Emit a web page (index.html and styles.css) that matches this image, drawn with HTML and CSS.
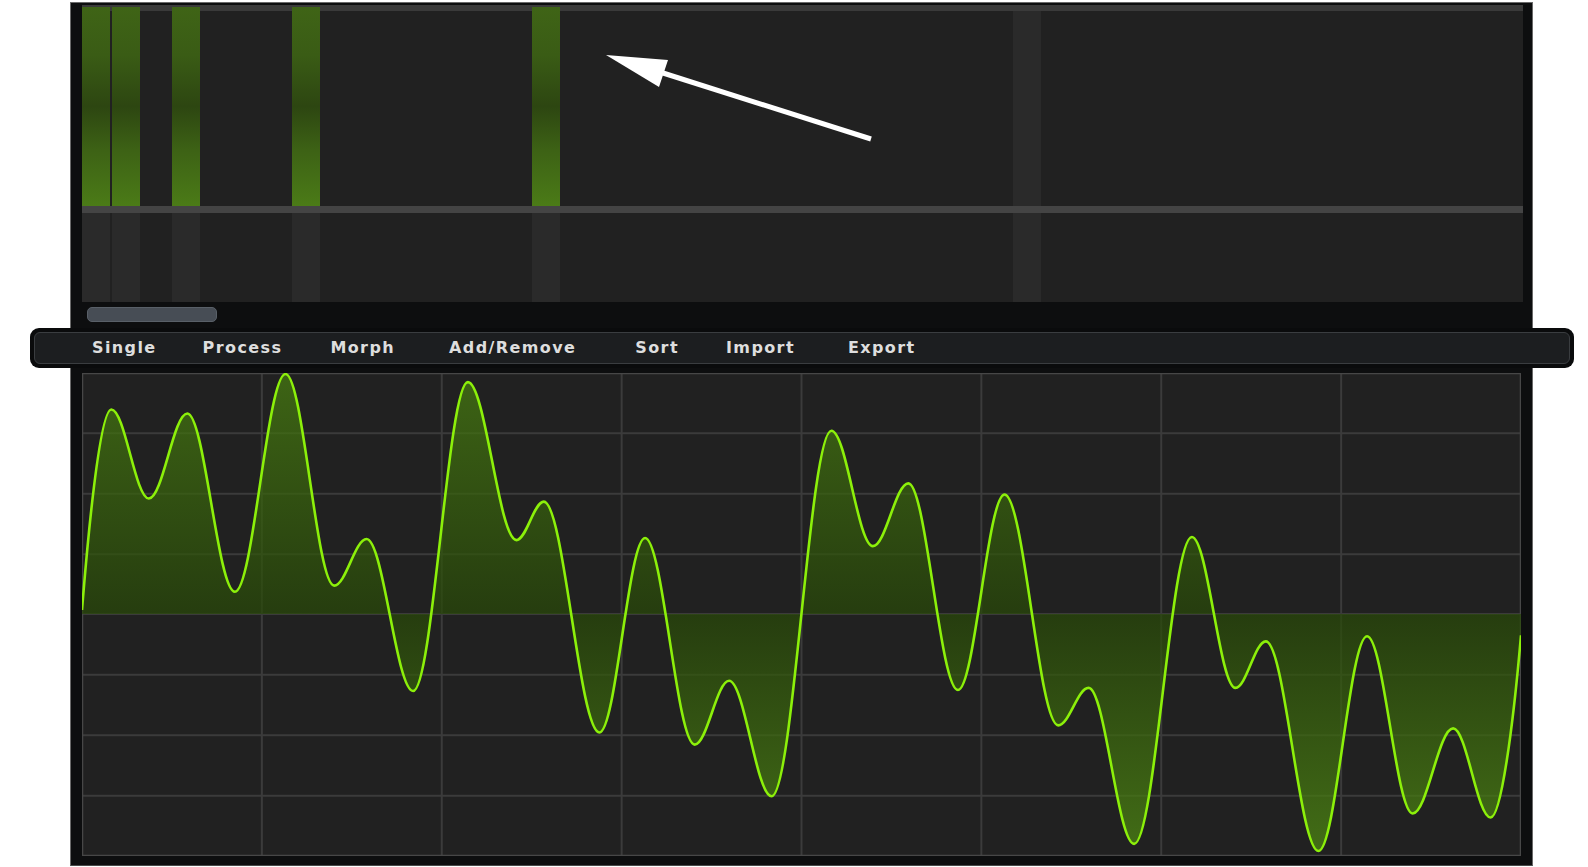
FILE: index.html
```html
<!DOCTYPE html>
<html>
<head>
<meta charset="utf-8">
<title>Wavetable</title>
<link rel="stylesheet" href="styles.css">
</head>
<body>
<div class="panel">
  <div class="harmonics">
    <div class="hx-top">
      <span class="b"></span><span class="b"></span><span></span><span class="b"></span>
      <span></span><span></span><span></span><span class="b"></span>
      <span></span><span></span><span></span><span></span><span></span><span></span><span></span><span class="b"></span>
      <span></span><span></span><span></span><span></span><span></span><span></span><span></span><span></span>
      <span></span><span></span><span></span><span></span><span></span><span></span><span></span><span class="d"></span>
      <span></span><span></span><span></span><span></span><span></span><span></span><span></span><span></span>
      <span></span><span></span><span></span><span></span><span></span><span></span><span></span><span></span>
    </div>
    <div class="hx-sep"></div>
    <div class="hx-bottom">
      <span class="l"></span><span class="l"></span><span></span><span class="l"></span>
      <span></span><span></span><span></span><span class="l"></span>
      <span></span><span></span><span></span><span></span><span></span><span></span><span></span><span class="l"></span>
      <span></span><span></span><span></span><span></span><span></span><span></span><span></span><span></span>
      <span></span><span></span><span></span><span></span><span></span><span></span><span></span><span class="l"></span>
      <span></span><span></span><span></span><span></span><span></span><span></span><span></span><span></span>
      <span></span><span></span><span></span><span></span><span></span><span></span><span></span><span></span>
    </div>
    <svg class="arrow" width="1441" height="297" viewBox="0 0 1441 297">
      <line x1="581" y1="68" x2="789" y2="134" stroke="#ffffff" stroke-width="5"/>
      <polygon points="524,50 586,55 577,82" fill="#ffffff"/>
    </svg>
  </div>
  <div class="scroll"><div class="thumb"></div></div>
  <div class="menu">
    <div class="menu-inner">
      <span class="item">Single</span>
      <span class="item">Process</span>
      <span class="item item-morph">Morph</span>
      <span class="item item-add">Add/Remove</span>
      <span class="item item-sort">Sort</span>
      <span class="item item-import">Import</span>
      <span class="item item-export">Export</span>
    </div>
  </div>
  <div class="wave">
    <svg width="1439" height="483" viewBox="81 368 1421 477" preserveAspectRatio="none">
      <defs>
        <linearGradient id="fillg" gradientUnits="userSpaceOnUse" x1="0" y1="368" x2="0" y2="845">
          <stop offset="0" stop-color="rgb(72,126,16)" stop-opacity="0.72"/>
          <stop offset="0.5" stop-color="rgb(40,72,8)" stop-opacity="0.72"/>
          <stop offset="1" stop-color="rgb(80,140,18)" stop-opacity="0.72"/>
        </linearGradient>
      </defs>
      <path class="grid" d="M258.6,368V845M436.25,368V845M613.9,368V845M791.5,368V845M969.1,368V845M1146.75,368V845M1324.4,368V845M81,427.6H1502M81,487.2H1502M81,546.9H1502M81,606H1502M81,666.1H1502M81,725.7H1502M81,785.4H1502"/>
      <rect class="frame" x="81.5" y="368.5" width="1420" height="476"/>
      <path class="area" d="M81,602 C86,540 98,404 110,404 C123.3,404 133.7,492 147,492 C160.7,492 171.3,408 185,408 C201.9,408 215.1,584 232,584 C250,584 264,369 282,369 C299.3,369 312.7,578 330,578 C341.5,578 350.5,532 362,532 C378.6,532 391.4,682 408,682 C427.4,682 442.6,377 462,377 C479.3,377 492.7,533 510,533 C519.7,533 527.3,495 537,495 C556.8,495 572.2,723 592,723 C608.2,723 620.8,531 637,531 C654.6,531 668.4,735 686,735 C698.2,735 707.8,672 720,672 C735.1,672 746.9,786 762,786 C783.2,786 799.8,425 821,425 C835.8,425 847.2,539 862,539 C874.6,539 884.4,477 897,477 C914.6,477 928.4,681 946,681 C962.6,681 975.4,488 992,488 C1011.1,488 1025.9,716 1045,716 C1055.8,716 1064.2,679 1075,679 C1091.2,679 1103.8,833 1120,833 C1140.5,833 1156.5,530 1177,530 C1192.5,530 1204.5,679 1220,679 C1230.8,679 1239.2,633 1250,633 C1268.7,633 1283.3,840 1302,840 C1319.3,840 1332.7,628 1350,628 C1366.2,628 1378.8,803 1395,803 C1409.4,803 1420.6,719 1435,719 C1448.3,719 1458.7,807 1472,807 C1482,807 1494,720 1502,627 L1502,606 L81,606 Z"/>
      <path class="line" d="M81,602 C86,540 98,404 110,404 C123.3,404 133.7,492 147,492 C160.7,492 171.3,408 185,408 C201.9,408 215.1,584 232,584 C250,584 264,369 282,369 C299.3,369 312.7,578 330,578 C341.5,578 350.5,532 362,532 C378.6,532 391.4,682 408,682 C427.4,682 442.6,377 462,377 C479.3,377 492.7,533 510,533 C519.7,533 527.3,495 537,495 C556.8,495 572.2,723 592,723 C608.2,723 620.8,531 637,531 C654.6,531 668.4,735 686,735 C698.2,735 707.8,672 720,672 C735.1,672 746.9,786 762,786 C783.2,786 799.8,425 821,425 C835.8,425 847.2,539 862,539 C874.6,539 884.4,477 897,477 C914.6,477 928.4,681 946,681 C962.6,681 975.4,488 992,488 C1011.1,488 1025.9,716 1045,716 C1055.8,716 1064.2,679 1075,679 C1091.2,679 1103.8,833 1120,833 C1140.5,833 1156.5,530 1177,530 C1192.5,530 1204.5,679 1220,679 C1230.8,679 1239.2,633 1250,633 C1268.7,633 1283.3,840 1302,840 C1319.3,840 1332.7,628 1350,628 C1366.2,628 1378.8,803 1395,803 C1409.4,803 1420.6,719 1435,719 C1448.3,719 1458.7,807 1472,807 C1482,807 1494,720 1502,627"/>
    </svg>
  </div>
</div>
</body>
</html>
```

FILE: styles.css
```css
html, body {
  margin: 0;
  padding: 0;
  background: #ffffff;
}

body {
  font-family: "DejaVu Sans", "Liberation Sans", sans-serif;
  overflow: hidden;
}

.panel {
  box-sizing: border-box;
  margin: 2px 0 0 70px;
  width: 1463px;
  height: 864px;
  border: 1px solid #6a6a6a;
  border-bottom-color: #4a4a4a;
  background: #0d0e0f;
  display: flex;
  flex-direction: column;
}

.harmonics {
  position: relative;
  margin: 2px 0 0 11px;
  width: 1441px;
  height: 297px;
  display: flex;
  flex-direction: column;
  background: #212121;
}

.hx-top {
  height: 201px;
  display: grid;
  grid-template-columns: repeat(48, 1fr);
  background: linear-gradient(to bottom, #3a3a3a 0, #3a3a3a 6px, #212121 6px);
}

.hx-top span.b {
  margin-top: 2px;
  padding-right: 2px;
  background-clip: content-box;
  background-image: linear-gradient(to bottom, #3f6416 0%, #3a5c15 24%, #2d4611 50%, #3d6215 72%, #4b7b17 100%);
}

.hx-top span.d {
  margin-top: 6px;
  padding-right: 2px;
  background-clip: content-box;
  background-color: #2a2a2a;
}

.hx-sep {
  height: 7px;
  background: #444444;
}

.hx-bottom {
  flex: 1;
  display: grid;
  grid-template-columns: repeat(48, 1fr);
  background: #212121;
}

.hx-bottom span.l {
  padding-right: 2px;
  background-clip: content-box;
  background-color: #2a2a2a;
}

.arrow {
  position: absolute;
  left: 0;
  top: 0;
}

.scroll {
  height: 26px;
  padding: 5px 0 0 16px;
  box-sizing: border-box;
}

.thumb {
  box-sizing: border-box;
  width: 130px;
  height: 15px;
  border-radius: 5px;
  background: #474d55;
  border: 1px solid #596068;
}

.menu {
  box-sizing: border-box;
  margin-left: -41px;
  width: 1544px;
  height: 40px;
  padding: 4px;
  border-radius: 9px;
  background: #0a0b0c;
}

.menu-inner {
  box-sizing: border-box;
  height: 100%;
  border: 1px solid #3a3d40;
  border-radius: 6px;
  background: #1c1e20;
  display: flex;
  align-items: center;
  padding-left: 57px;
  gap: 46px;
}

.item {
  color: #dedede;
  font-family: "DejaVu Sans", sans-serif;
  font-weight: bold;
  font-size: 16px;
  letter-spacing: 1.4px;
  line-height: 20px;
  padding-bottom: 1px;
}

.item-morph {
  margin-left: 2px;
}

.item-add {
  margin-left: 8px;
}

.item-sort {
  margin-left: 13px;
}

.item-import {
  margin-left: 1px;
}

.item-export {
  margin-left: 7px;
}

.wave {
  margin: 5px 0 0 11px;
  width: 1439px;
  height: 483px;
  background: #212121;
}

.wave svg {
  display: block;
}

.grid {
  fill: none;
  stroke: #3b3b3b;
  stroke-width: 2;
  vector-effect: non-scaling-stroke;
}

.frame {
  fill: none;
  stroke: #474747;
  stroke-width: 1.5;
  vector-effect: non-scaling-stroke;
}

.area {
  fill: url(#fillg);
  stroke: none;
}

.line {
  fill: none;
  stroke: #8cf00a;
  stroke-width: 2.6;
  stroke-linejoin: round;
  vector-effect: non-scaling-stroke;
}
```
